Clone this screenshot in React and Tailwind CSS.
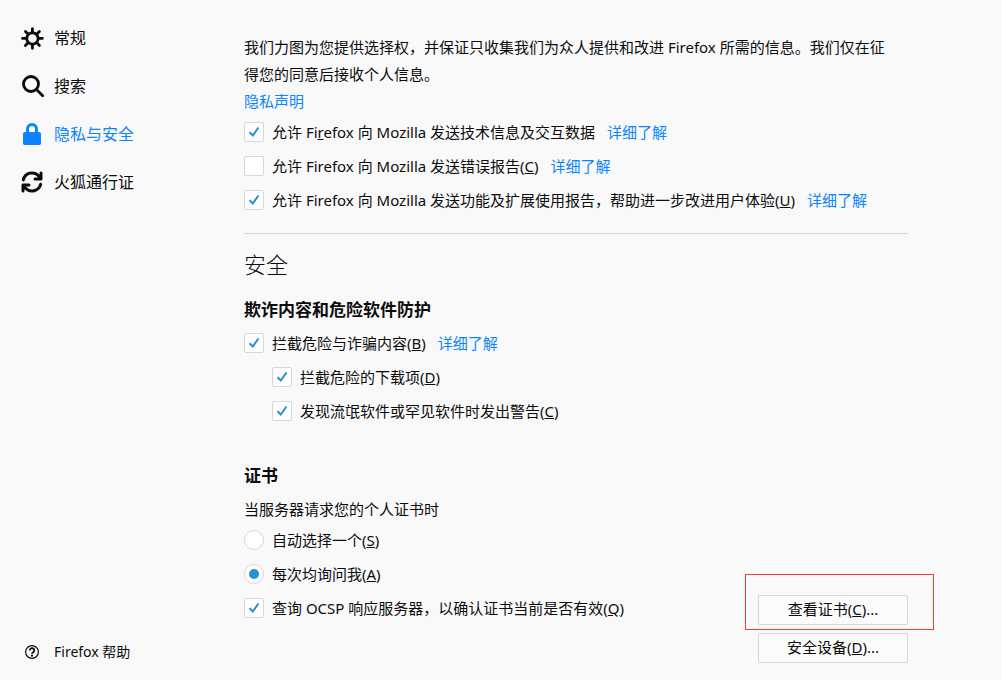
import React from "react";

const linkClass = "text-[#0a84ff] hover:underline";

function GearIcon() {
  return (
    <svg viewBox="-0.8 -0.8 17 17" className="size-6 shrink-0" fill="currentColor" aria-hidden="true">
      <path d="M15 7h-2.1a4.967 4.967 0 0 0-.732-1.753l1.49-1.49a1 1 0 0 0-1.414-1.414l-1.49 1.49A4.968 4.968 0 0 0 9 3.1V1a1 1 0 0 0-2 0v2.1a4.968 4.968 0 0 0-1.753.732l-1.49-1.49a1 1 0 0 0-1.414 1.415l1.49 1.49A4.967 4.967 0 0 0 3.1 7H1a1 1 0 0 0 0 2h2.1a4.968 4.968 0 0 0 .737 1.763c-.014.013-.032.017-.045.03l-1.45 1.45a1 1 0 1 0 1.414 1.414l1.45-1.45c.013-.013.018-.031.03-.045A4.968 4.968 0 0 0 7 12.9V15a1 1 0 0 0 2 0v-2.1a4.968 4.968 0 0 0 1.753-.732l1.49 1.49a1 1 0 0 0 1.414-1.414l-1.49-1.49A4.967 4.967 0 0 0 12.9 9H15a1 1 0 0 0 0-2zM5 8a3 3 0 1 1 3 3 3 3 0 0 1-3-3z" />
    </svg>
  );
}

function SearchIcon() {
  return (
    <svg viewBox="0 0 24 24" className="size-6 shrink-0" fill="none" stroke="currentColor" aria-hidden="true">
      <circle cx="11" cy="10" r="7.5" strokeWidth="2.8" />
      <path d="m16.5 15.500 6.200 6.200" strokeWidth="2.8" strokeLinecap="round" />
    </svg>
  );
}

function LockIcon() {
  return (
    <svg viewBox="0 0 24 24" className="size-6 shrink-0" fill="none" stroke="currentColor" aria-hidden="true">
      <rect x="3" y="10" width="18" height="13" rx="2" fill="currentColor" stroke="none" />
      <path d="M7.5 11V7a4.5 4.5 0 0 1 9 0v4" strokeWidth="3" />
    </svg>
  );
}

function SyncIcon() {
  return (
    <svg viewBox="0 0 16 16" className="size-6 shrink-0" fill="currentColor" aria-hidden="true">
      <path d="M14 1a1 1 0 0 0-1 1v1.146A6.948 6.948 0 0 0 1.227 6.307a1 1 0 1 0 1.94.484A4.983 4.983 0 0 1 8 3a4.919 4.919 0 0 1 3.967 2H10a1 1 0 0 0 0 2h4a1 1 0 0 0 1-1V2a1 1 0 0 0-1-1zm.046 7.481a1 1 0 0 0-1.213.728A4.983 4.983 0 0 1 8 13a4.919 4.919 0 0 1-3.967-2H6a1 1 0 0 0 0-2H2a1 1 0 0 0-1 1v4a1 1 0 0 0 2 0v-1.146a6.948 6.948 0 0 0 11.773-3.162 1 1 0 0 0-.727-1.211z" />
    </svg>
  );
}

function HelpIcon() {
  return (
    <svg viewBox="0 0 16 16" className="size-4 shrink-0" fill="none" stroke="currentColor" aria-hidden="true">
      <circle cx="8" cy="8" r="6.4" strokeWidth="1.2" />
      <path d="M5.8 6.4a2.2 2.2 0 1 1 3.4 1.8C8.3 8.700 8 9 8 9.800" strokeWidth="1.8" />
      <circle cx="8" cy="11.7" r="1.1" fill="currentColor" stroke="none" />
    </svg>
  );
}

function NavItem({ icon, children, active }) {
  return (
    <li>
      <a
        href="#"
        aria-current={active ? "page" : undefined}
        className={`flex h-12 items-center gap-2.5 text-base ${active ? "text-[#0a84ff]" : ""}`}
      >
        {icon}
        {children}
      </a>
    </li>
  );
}

function CheckRow({ id, checked, children, link }) {
  return (
    <div className="flex min-h-[34px] items-center">
      <span className="grid shrink-0 place-items-center">
        <input
          id={id}
          type="checkbox"
          defaultChecked={checked}
          className="peer col-start-1 row-start-1 size-5 appearance-none rounded-xs border border-[#d7d7db] bg-white"
        />
        <svg
          viewBox="0 0 20 20"
          className="pointer-events-none invisible col-start-1 row-start-1 size-5 peer-checked:visible"
          aria-hidden="true"
        >
          <path d="M5.5 10.2 8.8 13.500 14.5 5.500" fill="none" stroke="#2292d0" strokeWidth="2" />
        </svg>
      </span>
      <label htmlFor={id} className="pl-2">
        {children}
      </label>
      {link && (
        <a href="#" className={`ml-3 shrink-0 ${linkClass}`}>
          详细了解
        </a>
      )}
    </div>
  );
}

function RadioRow({ id, checked, children }) {
  return (
    <div className="flex min-h-[34px] items-center">
      <span className="grid shrink-0 place-items-center">
        <input
          id={id}
          type="radio"
          name="certificate"
          defaultChecked={checked}
          className="peer col-start-1 row-start-1 size-5 appearance-none rounded-full border border-[#d7d7db] bg-white"
        />
        <span className="pointer-events-none invisible col-start-1 row-start-1 size-2.5 rounded-full bg-[#2292d0] peer-checked:visible" />
      </span>
      <label htmlFor={id} className="pl-2">
        {children}
      </label>
    </div>
  );
}

function PanelButton({ children }) {
  return (
    <button
      type="button"
      className="flex h-[30px] w-[150px] justify-center rounded-xs border border-[#d7d7db] bg-[#fbfbfb] hover:bg-[#ebebeb]"
    >
      <span>{children}</span>
    </button>
  );
}

export default function App() {
  return (
    <div className="flex min-h-screen bg-[#f9f9fa] font-['Noto_Sans','Noto_Sans_CJK_SC',sans-serif] text-[15px] leading-[27px] text-[#0c0c0d]">
      <aside className="flex w-[244px] shrink-0 flex-col justify-between pt-3.5 pb-3.5 pl-5">
        <nav>
          <ul>
            <NavItem icon={<GearIcon />}>常规</NavItem>
            <NavItem icon={<SearchIcon />}>搜索</NavItem>
            <NavItem icon={<LockIcon />} active>
              隐私与安全
            </NavItem>
            <NavItem icon={<SyncIcon />}>火狐通行证</NavItem>
          </ul>
        </nav>
        <a href="#" className="flex items-center gap-3.5 pl-1 text-sm leading-7">
          <HelpIcon />
          Firefox 帮助
        </a>
      </aside>

      <main className="min-w-0 max-w-[664px] flex-1 pt-[34px] pb-4">
        <section>
          <p className="pr-4">
            我们力图为您提供选择权，并保证只收集我们为众人提供和改进 Firefox 所需的信息。我们仅在征得您的同意后接收个人信息。
          </p>
          <a href="#" className={`block w-fit ${linkClass}`}>
            隐私声明
          </a>
          <CheckRow id="telemetry" checked link>
            允许 Fi<u>r</u>efox 向 Mozilla 发送技术信息及交互数据
          </CheckRow>
          <CheckRow id="crash-reports" link>
            允许 Firefox 向 Mozilla 发送错误报告(<u>C</u>)
          </CheckRow>
          <CheckRow id="health-report" checked link>
            允许 Firefox 向 Mozilla 发送功能及扩展使用报告，帮助进一步改进用户体验(<u>U</u>)
          </CheckRow>
        </section>

        <hr className="mt-4 border-[#d7d7db]" />

        <section>
          <h1 className="mt-3.5 text-[22px] leading-8 font-light">安全</h1>
          <h2 className="mt-4 mb-0.5 text-[17px] leading-7 font-bold">欺诈内容和危险软件防护</h2>
          <CheckRow id="block-dangerous" checked link>
            拦截危险与诈骗内容(<u>B</u>)
          </CheckRow>
          <div className="pl-7">
            <CheckRow id="block-downloads" checked>
              拦截危险的下载项(<u>D</u>)
            </CheckRow>
            <CheckRow id="warn-unwanted" checked>
              发现流氓软件或罕见软件时发出警告(<u>C</u>)
            </CheckRow>
          </div>
        </section>

        <section className="mt-[34px]">
          <h2 className="mb-1.5 text-[17px] leading-7 font-bold">证书</h2>
          <fieldset>
            <legend>当服务器请求您的个人证书时</legend>
            <RadioRow id="cert-auto">
              自动选择一个(<u>S</u>)
            </RadioRow>
            <RadioRow id="cert-ask" checked>
              每次均询问我(<u>A</u>)
            </RadioRow>
          </fieldset>
          <div className="flex items-start justify-between">
            <CheckRow id="ocsp" checked>
              查询 OCSP 响应服务器，以确认证书当前是否有效(<u>Q</u>)
            </CheckRow>
            <div className="flex flex-col gap-2 pt-1">
              <div className="relative flex">
                <PanelButton>
                  查看证书(<u>C</u>)...
                </PanelButton>
                <span className="pointer-events-none absolute -top-[21px] -right-[26px] -bottom-[5px] -left-[13px] border border-[#f83b3b]" />
              </div>
              <PanelButton>
                安全设备(<u>D</u>)...
              </PanelButton>
            </div>
          </div>
        </section>
      </main>
    </div>
  );
}
